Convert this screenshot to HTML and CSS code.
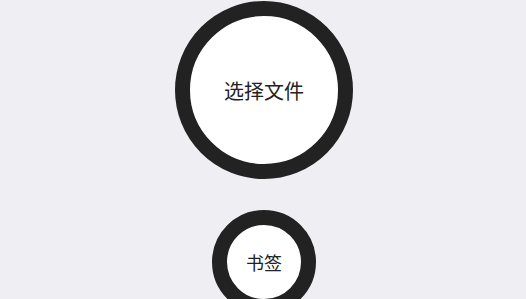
FILE: index.html
```html
<!DOCTYPE html>
<html lang="zh">
<head>
<meta charset="UTF-8">
<title>选择文件</title>
<link rel="stylesheet" href="styles.css">
</head>
<body>

<div class="container">
    <button class="circle-button big">选择文件</button>
    <button class="circle-button small">书签</button>
</div>

</body>
</html>
```

FILE: styles.css
```css
body {
    margin: 0;
    background-color: #efeef3;
    font-family: "Noto Sans CJK SC", "Noto Sans", sans-serif;
    color: #222;
}

.container {
    display: flex;
    flex-direction: column;
    align-items: center;
    gap: 31px;
    padding-top: 1px;
    padding-left: 2px;
}

.circle-button {
    display: flex;
    justify-content: center;
    align-items: center;
    box-sizing: border-box;
    border: 15px solid #222;
    border-radius: 50%;
    background: white;
    color: #222;
    font-family: inherit;
    padding: 0;
    flex-shrink: 0;
}

.big {
    width: 178px;
    height: 178px;
    font-size: 20px;
}

.small {
    width: 104px;
    height: 104px;
    font-size: 18px;
}
```
